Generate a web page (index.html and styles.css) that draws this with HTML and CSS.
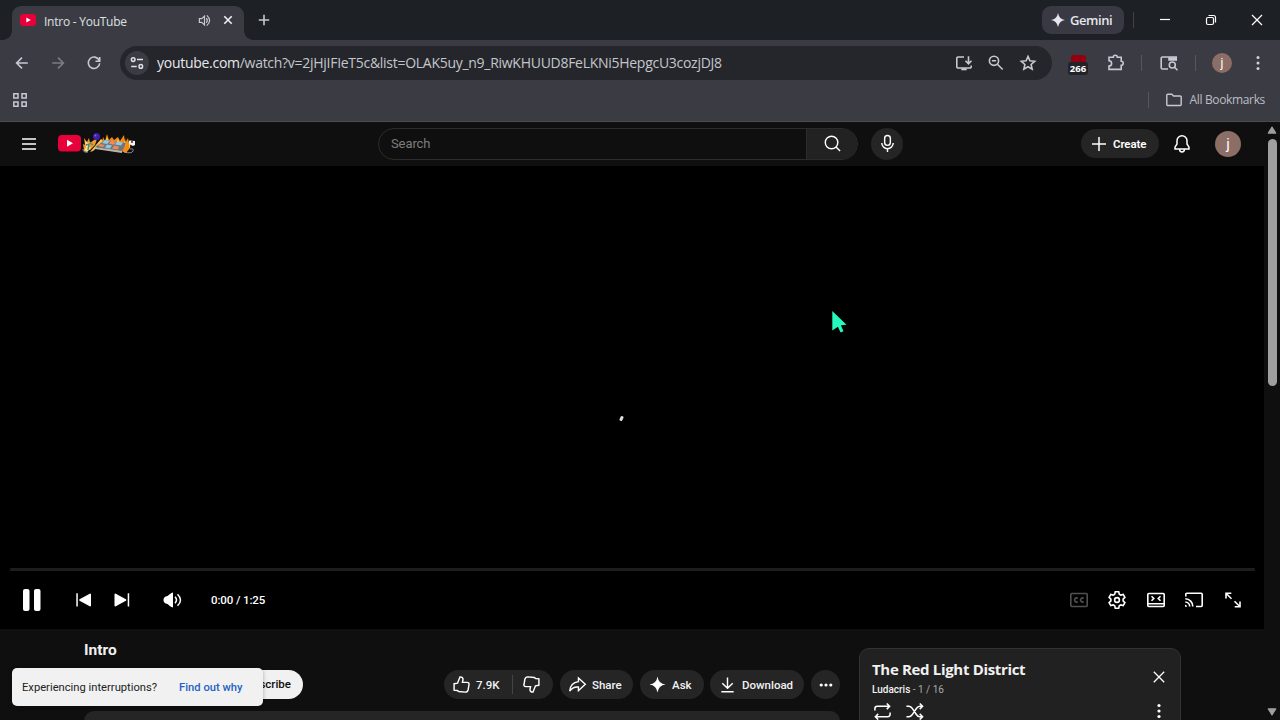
FILE: index.html
```html
<!DOCTYPE html>
<html lang="en">
<head>
    <meta charset="UTF-8">
    <meta name="viewport" content="width=device-width, initial-scale=1.0">
    <title>Intro - YouTube</title>
    <link rel="stylesheet" href="styles.css">
</head>
<body>
    <!-- Browser: tab strip -->
    <div class="tab-strip">
        <div class="tab">
            <svg class="favicon" viewBox="0 0 16 12"><rect width="16" height="12" rx="3" fill="#e8003a"/><path d="M6.3 3.4v5.2L10.8 6z" fill="#fff"/></svg>
            <span class="tab-title">Intro - YouTube</span>
            <svg class="tab-audio" viewBox="0 0 14 14"><path d="M1.500 5v4H4l3 2.800V2.200L4 5z"/><path d="M9 4.500q2 2.500 0 5M9.500 1.500q6 5.500 0 11"/></svg>
            <svg class="tab-close" viewBox="0 0 10 10"><path d="M1.300 1.300l7.400 7.400M8.700 1.300L1.300 8.700"/></svg>
        </div>
        <svg class="new-tab" viewBox="0 0 12 12"><path d="M6 .8v10.400M.8 6h10.400"/></svg>
        <div class="gemini">
            <svg viewBox="0 0 14 14"><path d="M7 0Q8 6 14 7Q8 8 7 14Q6 8 0 7Q6 6 7 0z" fill="#e6e6ec"/></svg>
            <span>Gemini</span>
        </div>
        <span class="strip-divider"></span>
        <div class="window-buttons">
            <svg viewBox="0 0 12 12"><path d="M1 5.500h10"/></svg>
            <svg viewBox="0 0 12 12"><rect x="1.500" y="3.500" width="7" height="7" rx="1.500"/><path d="M3.500 1.500H8.500a2 2 0 0 1 2 2V8.500"/></svg>
            <svg viewBox="0 0 12 12"><path d="M1 1l10 10M11 1L1 11"/></svg>
        </div>
    </div>

    <!-- Browser: toolbar -->
    <div class="toolbar">
        <svg class="nav-icon" viewBox="0 0 16 16"><path d="M13.800 8H2.800M8 2.600L2.600 8L8 13.400"/></svg>
        <svg class="nav-icon disabled" viewBox="0 0 16 16"><path d="M2.200 8h11M8 2.600L13.400 8L8 13.400"/></svg>
        <svg class="nav-icon" viewBox="0 0 16 16"><path d="M13.200 5.400A5.700 5.700 0 1 0 13.700 8.200M13.700 2v4.200H9.500"/></svg>
        <div class="omnibox">
            <span class="site-info">
                <svg viewBox="0 0 14 14"><circle cx="3.200" cy="3.600" r="1.800"/><path d="M7 3.600h6M1.200 10.400h5.500"/><circle cx="10.800" cy="10.400" r="1.800"/></svg>
            </span>
            <span class="url"><b>youtube.com</b>/watch?v=2jHjIFIeT5c&amp;list=OLAK5uy_n9_RiwKHUUD8FeLKNi5HepgcU3cozjDJ8</span>
            <svg class="box-icon" viewBox="0 0 20 20"><path d="M10 4H4a1.200 1.200 0 0 0-1.200 1.200V13.800A1.200 1.200 0 0 0 4 15h12a1.200 1.200 0 0 0 1.200-1.200V12.500M14.500 3.200v7.300M11.500 7.800l3 3l3-3"/><path d="M7.300 16.300h5.400" stroke-width="2"/></svg>
            <svg class="box-icon" viewBox="0 0 20 20"><circle cx="8" cy="7.800" r="4.600"/><path d="M11.400 11.200l5.300 5.300M5.900 7.800h4.200"/></svg>
            <svg class="box-icon" viewBox="0 0 20 20"><path d="M10 3.400l1.900 4.400l4.800.45l-3.600 3.200l1.050 4.700L10 13.700l-4.150 2.450l1.050-4.700L3.300 8.250l4.800-.45z"/></svg>
        </div>
        <div class="ext-badge"><i></i><span>266</span></div>
        <svg class="bar-icon puzzle" viewBox="0 0 20 20"><path d="M3 4.200H7.300a2 2 0 0 1 4 0H15.200V8.300a2 2 0 0 1 0 4V16.400H3V13a2.600 2.600 0 0 0 0-5.200z"/></svg>
        <span class="bar-divider"></span>
        <svg class="bar-icon lens" viewBox="0 0 20 20"><path d="M9 16H3.500A1.300 1.300 0 0 1 2.200 14.700V5.300A1.300 1.300 0 0 1 3.500 4H17.200V7.500"/><path d="M10 5h7.200v2H10z" fill="#c7c8d2"/><circle cx="13.300" cy="12" r="3"/><path d="M15.500 14.200l3 3"/></svg>
        <span class="bar-divider"></span>
        <span class="avatar small">j</span>
        <svg class="kebab" viewBox="0 0 4 16"><circle cx="2" cy="2.500" r="1.500"/><circle cx="2" cy="8" r="1.500"/><circle cx="2" cy="13.500" r="1.500"/></svg>
    </div>

    <!-- Browser: bookmarks -->
    <div class="bookmarks">
        <svg class="apps" viewBox="0 0 16 16"><path d="M1.800 1.800h4.200v4.200H1.800zM10 1.800h4.200v4.200H10zM1.800 10h4.200v4.200H1.800zM10 10h4.200v4.200H10z"/></svg>
        <span class="bar-divider"></span>
        <svg class="folder" viewBox="0 0 18 14"><path d="M1.800 2.200A1 1 0 0 1 2.800 1.200H6.800L8.600 3H15.200a1 1 0 0 1 1 1V11.500a1 1 0 0 1-1 1H2.800a1 1 0 0 1-1-1z"/></svg>
        <span class="bookmarks-label">All Bookmarks</span>
    </div>

    <div class="page">
        <div class="content">
            <!-- Masthead -->
            <div class="masthead">
                <svg class="menu" viewBox="0 0 16 14"><path d="M1 2h14M1 7h14M1 12h14"/></svg>
                <svg class="logo" viewBox="0 0 80 24">
                    <rect x="1" y="4" width="23" height="16.500" rx="4" fill="#e8003a"/>
                    <path d="M10 8.800v7l6-3.500z" fill="#fff"/>
                    <!-- left flame and bat -->
                    <path d="M27 19l-1-6l2 1l-1-7l3 4l2-4l1 5l4-3l3-1l-2 6l-5 5z" fill="#f59a23"/>
                    <path d="M28 10l3 2l3-1l-3 4l3 2l-4 4l-3-1l2-4z" fill="#ffe08a"/>
                    <path d="M44 8l3 2L36 20l-3 1z" fill="#f4c752"/>
                    <path d="M29 14l3-1l-1 6M33 12l3 2" stroke="#3e8d8b" fill="none"/>
                    <circle cx="39.500" cy="5.500" r="3.500" fill="#3f1fae"/>
                    <circle cx="38.500" cy="4.500" r="1" fill="#8068e8"/>
                    <!-- flames behind the board -->
                    <path d="M45 12l1-6l2 4l2-7l2 6l3-3l2 3l4-3l2 4l4-6l1 8l3-5l1 5l2-3l-1 8l-4 5z" fill="#f58a12"/>
                    <path d="M49 10l1-4l1 4zM60 11l1-3l1 3zM67 13l1-6l1 7zM72 15l1-4l0 6z" fill="#ffdc60"/>
                    <path d="M38 16l10-7l21 3l-4 9z" fill="#6f747a"/>
                    <path d="M38 16l27 4v2L38 18z" fill="#b9b5a8"/>
                    <path d="M48 9l5 1l-3 3l-5-1zM60 10.500l6 1l-2 3l-6-1zM50 13.500l5 1l-2 3l-5-1z" fill="#91c8e8"/>
                    <path d="M54 9.800l5 1l-2 3l-5-1zM57 14.500l5 1l-1 3l-6-1zM43 13l5 1l-2 2l-5-1z" fill="#ee8b57"/>
                    <path d="M26 18q0 4 5 3M67 21q8 2 9-1q1-3-3-2" stroke="#aaa" fill="none" stroke-width=".8"/>
                    <path d="M72 9.500l6 .5v4l-2 1l-4-2z" fill="#f4f4f4"/>
                    <path d="M75 10v2" stroke="#333"/>
                </svg>
                <div class="search">
                    <span class="search-field">Search</span>
                    <span class="search-btn"><svg viewBox="0 0 20 20"><circle cx="9" cy="9" r="6.600"/><path d="M13.700 13.700L18 18"/></svg></span>
                </div>
                <span class="mic"><svg viewBox="0 0 20 20"><rect x="7" y="1.500" width="6" height="10.500" rx="3"/><path d="M4 9.500a6 6 0 0 0 12 0M10 15.500v3.500"/></svg></span>
                <div class="create">
                    <svg viewBox="0 0 16 16"><path d="M8 1v14M1 8h14"/></svg>
                    <span>Create</span>
                </div>
                <svg class="bell" viewBox="0 0 18 20"><path d="M9 1.800a5 5 0 0 0-5 5V10L2 13.200V15h14v-1.800L14 10V6.800a5 5 0 0 0-5-5zM6.600 15.500a2.400 2.400 0 0 0 4.800 0"/></svg>
                <span class="avatar">j</span>
            </div>

            <!-- Player -->
            <div class="player">
                <div class="stage">
                    <span class="spinner"></span>
                    <svg class="cursor" viewBox="0 0 15 23"><path d="M.3 0L14.500 13.800L8.900 14.300L11.500 20.200L8.600 21.600L5.900 15.700L.3 19.500z" fill="#26f9bd"/></svg>
                </div>
                <div class="progress"></div>
                <div class="controls">
                    <svg class="pause" viewBox="0 0 18 22"><rect width="6.500" height="22" rx="2"/><rect x="11" width="6.500" height="22" rx="2"/></svg>
                    <svg class="skip" viewBox="0 0 16 14"><path d="M.3.3h1.500v13.200H.3zM15 1.500v11a.8.8 0 0 1-1.300.7L3.600 7.700a.8.8 0 0 1 0-1.400L13.700.8A.8.8 0 0 1 15 1.500z"/></svg>
                    <svg class="skip next" viewBox="0 0 16 14"><path d="M13.700.3h1.500v13.200h-1.500zM.5 1.500v11a.8.8 0 0 0 1.300.7L11.900 7.700a.8.8 0 0 0 0-1.400L1.800.8A.8.8 0 0 0 .5 1.500z"/></svg>
                    <svg class="volume" viewBox="0 0 20 16"><path d="M10 .5v15C8 15 6 13.500 4.500 12C1.500 11.500.5 10 .5 8S1.500 4.500 4.500 4C6 2.500 8 1 10 .5z"/><path d="M12 4.800q3 3.200 0 6.400M14.500 2.200q6 5.800 0 11.600" fill="none" stroke="#fff" stroke-width="1.500"/></svg>
                    <span class="time">0:00 / 1:25</span>
                    <div class="controls-right">
                        <svg class="dim" viewBox="0 0 20 20"><rect x="1.800" y="3.500" width="16.400" height="13" rx="1"/><path d="M8.800 8.400A2 2 0 1 0 8.800 11.600M14.800 8.400A2 2 0 1 0 14.800 11.600"/></svg>
                        <svg viewBox="0 0 20 20"><path d="M8.300 1.800h3.400l.6 2.400l1.500.9l2.400-.7l1.700 2.900l-1.800 1.800v1.800l1.800 1.800l-1.700 2.900l-2.400-.7l-1.500.9l-.6 2.400H8.300l-.6-2.400l-1.500-.9l-2.400.7l-1.700-2.900l1.800-1.800V9.100L2.100 7.300l1.700-2.900l2.400.7l1.500-.9z"/><circle cx="10" cy="10" r="2.400"/></svg>
                        <svg viewBox="0 0 20 20"><rect x="1.800" y="3.500" width="16.400" height="13" rx="1"/><path d="M2 13.700h16M5.500 6.200l2.300 2.300l-2.300 2.300M14.500 6.200l-2.300 2.300l2.300 2.300"/></svg>
                        <svg viewBox="0 0 20 20"><path d="M1.800 6.500V4.300a1 1 0 0 1 1-1H17.200a1 1 0 0 1 1 1V15.500a1 1 0 0 1-1 1H12M1.300 8.800a7.500 7.500 0 0 1 7.500 7.700M1.300 12a4.500 4.500 0 0 1 4.400 4.500"/><path d="M1 14.800a2 2 0 0 1 2 2H1z" fill="#fff" stroke="none"/></svg>
                        <svg viewBox="0 0 20 20"><path d="M3 8.500V3.300H8.300M3.500 3.800l5 5M17 11.500v5.200h-5.300M16.500 16.200l-5-5"/></svg>
                    </div>
                </div>
            </div>

            <!-- Below the player -->
            <div class="below">
                <div class="primary">
                    <h1>Intro</h1>
                    <div class="actions">
                        <span class="subscribe">Subscribe</span>
                        <div class="pill likes">
                            <svg viewBox="0 0 20 20"><path d="M2.200 9.200L5.800 8.600L8.400 2Q11.800 2 11.600 5L11 7.800H16Q18.300 8 17.900 10L17 15.500Q16.300 18 14 18L7 17.300L5.500 16.300L2.200 16z"/></svg>
                            <span>7.9K</span>
                            <i></i>
                            <svg class="flip" viewBox="0 0 20 20"><path d="M2.200 9.200L5.800 8.600L8.400 2Q11.800 2 11.600 5L11 7.800H16Q18.300 8 17.900 10L17 15.500Q16.300 18 14 18L7 17.300L5.500 16.300L2.200 16z"/></svg>
                        </div>
                        <div class="pill share">
                            <svg viewBox="0 0 20 20"><path d="M11 3.200L18.200 9.800L11 16.500V12.700Q5 12 1.800 17Q2.500 8 11 7z"/></svg>
                            <span>Share</span>
                        </div>
                        <div class="pill ask">
                            <svg viewBox="0 0 20 20"><path d="M10 1.500Q11 9 18.500 10Q11 11 10 18.500Q9 11 1.500 10Q9 9 10 1.500z" fill="#fff" stroke="none"/></svg>
                            <span>Ask</span>
                        </div>
                        <div class="pill download">
                            <svg viewBox="0 0 20 20"><path d="M10 2.500v11.300M4.500 8.600L10 14l5.500-5.400M3.500 17.600h13"/></svg>
                            <span>Download</span>
                        </div>
                        <div class="pill more">
                            <svg viewBox="0 0 14 4"><circle cx="2.200" cy="2" r="1.600"/><circle cx="7" cy="2" r="1.600"/><circle cx="11.800" cy="2" r="1.600"/></svg>
                        </div>
                    </div>
                    <div class="description"></div>
                </div>
                <div class="playlist">
                    <div class="playlist-head">
                        <div>
                            <h2>The Red Light District</h2>
                            <p>Ludacris <span>- 1 / 16</span></p>
                        </div>
                        <svg viewBox="0 0 12 12"><path d="M.8.8l10.400 10.400M11.200.8L.8 11.200"/></svg>
                    </div>
                    <div class="playlist-tools">
                        <svg viewBox="0 0 20 20"><path d="M2 9V7Q2 4.500 4.500 4.500H17M14.500 1.500l3 3l-3 3M18 11v2q0 2.500-2.500 2.500H3M5.500 12.500l-3 3l3 3"/></svg>
                        <svg viewBox="0 0 20 20"><path d="M1.500 4.500H4Q6 4.500 7.500 6.500L12 13.200Q13.500 15.500 15.500 15.500H18M1.500 15.500H4Q6 15.500 7.500 13.500L12 6.800Q13.500 4.500 15.500 4.500H18M15.500 1.500l3 3l-3 3M15.500 12.500l3 3l-3 3"/></svg>
                        <svg class="kebab" viewBox="0 0 4 16"><circle cx="2" cy="2.500" r="1.600"/><circle cx="2" cy="8" r="1.600"/><circle cx="2" cy="13.500" r="1.600"/></svg>
                    </div>
                </div>
            </div>
        </div>

        <div class="scrollbar">
            <svg viewBox="0 0 10 8"><path d="M5 .8L9 7.200H1z" stroke-width="1"/></svg>
            <span class="thumb"></span>
            <svg class="down" viewBox="0 0 10 8"><path d="M5 7.200L1 .8h8z" stroke-width="1"/></svg>
        </div>
    </div>

    <div class="toast">
        <span>Experiencing interruptions?</span>
        <a>Find out why</a>
    </div>
</body>
</html>
```
FILE: styles.css
```css
* {
    box-sizing: border-box;
}
body {
    margin: 0;
    width: 1280px;
    height: 720px;
    overflow: hidden;
    display: flex;
    flex-direction: column;
    background: #0f0f0f;
    color: #fff;
    font-family: Roboto, sans-serif;
    position: relative;
}
svg {
    display: block;
    flex: none;
    fill: none;
    stroke: #c7c8d2;
    stroke-width: 1.6;
}
h1, h2, p {
    margin: 0;
}

/* tab strip */
.tab-strip {
    height: 40px;
    flex: none;
    display: flex;
    align-items: center;
    background: #1d2025;
    font-family: "Open Sans", sans-serif;
}
.tab {
    position: relative;
    width: 232px;
    height: 34px;
    margin: 6px 0 0 12px;
    padding: 0 11px 6px 8px;
    display: flex;
    align-items: center;
    background: #3b3c43;
    border-radius: 9px 9px 0 0;
}
.tab::before,
.tab::after {
    content: "";
    position: absolute;
    bottom: 0;
    width: 9px;
    height: 9px;
}
.tab::before {
    left: -9px;
    background: radial-gradient(circle at 0 0, #1d2025 8.5px, #3b3c43 9px);
}
.tab::after {
    right: -9px;
    background: radial-gradient(circle at 100% 0, #1d2025 8.5px, #3b3c43 9px);
}
.favicon {
    width: 16px;
    height: 12px;
    stroke: none;
}
.tab-title {
    flex: 1;
    margin-left: 8px;
    font-size: 12px;
    line-height: 20px;
    padding-top: 3px;
    letter-spacing: -0.25px;
    color: #dfe0e6;
}
.tab-audio {
    width: 13px;
    height: 13px;
    margin-right: 12px;
    stroke-width: 1.3;
}
.tab-close {
    width: 10px;
    height: 10px;
    stroke: #f0f0f4;
}
.new-tab {
    width: 12px;
    height: 12px;
    margin-left: 14px;
}
.gemini {
    width: 82px;
    height: 28px;
    margin-left: auto;
    padding-left: 9px;
    display: flex;
    align-items: center;
    gap: 5px;
    border-radius: 9px;
    background: #383942;
    font-size: 13px;
    font-weight: 600;
    letter-spacing: -0.45px;
    color: #e6e6ec;
}
.gemini svg {
    width: 14px;
    height: 14px;
    stroke: none;
}
.strip-divider {
    width: 1px;
    height: 16px;
    margin-left: 9px;
    background: #3f4149;
}
.window-buttons {
    display: flex;
    gap: 34px;
    margin: 0 17px 0 25px;
}
.window-buttons svg {
    width: 12px;
    height: 12px;
    stroke: #fff;
    stroke-width: 1.2;
}

/* toolbar */
.toolbar {
    height: 46px;
    flex: none;
    display: flex;
    align-items: center;
    padding-left: 14px;
    background: #3b3c43;
    font-family: "Open Sans", sans-serif;
}
.nav-icon {
    width: 16px;
    height: 16px;
    margin-right: 20px;
}
.nav-icon.disabled {
    stroke: #7b7c84;
}
.nav-icon:nth-child(3) {
    margin-right: 18px;
}
.omnibox {
    width: 932px;
    height: 34px;
    padding: 0 14px 0 5px;
    display: flex;
    align-items: center;
    gap: 12px;
    border-radius: 17px;
    background: #24262b;
}
.site-info {
    width: 24px;
    height: 24px;
    display: grid;
    place-items: center;
    border-radius: 50%;
    background: #3b3c43;
}
.site-info svg {
    width: 14px;
    height: 14px;
    stroke: #e0e0e6;
    stroke-width: 1.5;
}
.url {
    flex: 1;
    margin: -2px 0 0 -4px;
    font-size: 14px;
    letter-spacing: -0.28px;
    white-space: nowrap;
    color: #c5c6cb;
}
.url b {
    font-weight: 400;
    color: #e8e8ec;
}
.box-icon,
.bar-icon {
    width: 20px;
    height: 20px;
}
.ext-badge {
    width: 20px;
    margin: 4px 0 0 16px;
    display: flex;
    flex-direction: column;
    align-items: center;
}
.ext-badge i {
    width: 15px;
    height: 7px;
    border-radius: 3px 3px 0 0;
    background: #930010;
}
.ext-badge span {
    padding: 0 2px;
    border-radius: 3px;
    background: #222328;
    font-size: 9.5px;
    line-height: 13px;
    font-weight: 700;
}
.puzzle {
    margin: 0 15px 0 18px;
}
.lens {
    margin: 0 16px 0 17px;
}
.bar-divider {
    width: 1px;
    height: 16px;
    background: #55565f;
}
.avatar {
    width: 26px;
    height: 26px;
    display: grid;
    place-items: center;
    border-radius: 50%;
    background: #8d6e66;
    font-family: Roboto, sans-serif;
    font-size: 15px;
}
.avatar.small {
    width: 20px;
    height: 20px;
    margin: 0 24px 0 16px;
    font-size: 12px;
}
.kebab {
    width: 4px;
    height: 16px;
    fill: #d0d1d8;
    stroke: none;
}

/* bookmarks */
.bookmarks {
    height: 36px;
    flex: none;
    display: flex;
    align-items: center;
    padding: 0 15px 8px 12px;
    background: #3b3c43;
    border-bottom: 1px solid #4b4c50;
    font-family: "Open Sans", sans-serif;
}
.apps {
    width: 16px;
    height: 16px;
    stroke-width: 1.5;
}
.bookmarks .bar-divider {
    margin-left: auto;
}
.folder {
    width: 18px;
    height: 14px;
    margin: 0 7px 0 16px;
    stroke-width: 1.4;
}
.bookmarks-label {
    font-size: 12px;
    line-height: 18px;
    letter-spacing: -0.35px;
    color: #bcbdc6;
}

/* page */
.page {
    flex: 1;
    min-height: 0;
    display: flex;
}
.content {
    width: 1264px;
    min-width: 0;
    overflow: hidden;
}
.masthead {
    height: 44px;
    display: flex;
    align-items: center;
    padding: 0 0 1px 21px;
}
.masthead svg {
    stroke: #fff;
    stroke-width: 1.5;
}
.menu {
    width: 16px;
    height: 14px;
}
.masthead .logo {
    width: 80px;
    height: 24px;
    margin: -2px 0 0 19.5px;
    stroke: none;
}
.search {
    width: 480px;
    height: 32px;
    margin-left: 241.5px;
    display: flex;
    border: 1px solid #2c2c2c;
    border-radius: 16px;
    overflow: hidden;
}
.search-field {
    flex: 1;
    padding-left: 12px;
    font-size: 13px;
    line-height: 29px;
    letter-spacing: -0.1px;
    color: #7d7d7d;
}
.search-btn {
    width: 51px;
    display: grid;
    place-items: center;
    border-left: 1px solid #2c2c2c;
    background: #222;
}
.search-btn svg {
    width: 19px;
    height: 19px;
}
.mic {
    width: 32px;
    height: 32px;
    margin-left: 13px;
    display: grid;
    place-items: center;
    border-radius: 50%;
    background: #252525;
}
.mic svg {
    width: 19px;
    height: 19px;
}
.create {
    width: 78px;
    height: 29px;
    margin-left: auto;
    padding-left: 10px;
    display: flex;
    align-items: center;
    gap: 6px;
    border-radius: 15px;
    background: #252525;
    font-size: 11.5px;
    font-weight: 600;
    letter-spacing: -0.1px;
}
.create svg {
    width: 16px;
    height: 16px;
}
.bell {
    width: 18px;
    height: 20px;
    margin: 0 24px 0 14px;
}
.masthead .avatar {
    margin-right: 23px;
}

/* player */
.player {
    height: 463px;
    display: flex;
    flex-direction: column;
    background: #000;
}
.stage {
    position: relative;
    flex: 1;
}
.spinner {
    position: absolute;
    left: 620px;
    top: 250px;
    width: 3px;
    height: 5px;
    border-radius: 1px;
    background: #ddd;
    transform: rotate(25deg);
}
.cursor {
    position: absolute;
    left: 832px;
    top: 145px;
    width: 15px;
    height: 23px;
    stroke: none;
}
.progress {
    height: 3px;
    margin: 0 9px 0 10px;
    border-radius: 1px;
    background: #1d1d1d;
}
.controls {
    height: 58px;
    display: flex;
    align-items: center;
    padding: 0 21.5px 0 23px;
}
.controls svg {
    fill: #fff;
    stroke: none;
}
.pause {
    width: 18px;
    height: 22px;
}
.skip {
    width: 16px;
    height: 14px;
    margin-left: 35px;
}
.skip.next {
    margin-left: 22px;
}
.volume {
    width: 20px;
    height: 16px;
    margin-left: 33px;
}
.time {
    margin-left: 28px;
    font-size: 11.5px;
    font-weight: 500;
    letter-spacing: -0.12px;
}
.controls-right {
    margin-left: auto;
    display: flex;
    gap: 18.5px;
}
.controls-right svg {
    width: 20px;
    height: 20px;
    fill: none;
    stroke: #fff;
    stroke-width: 1.6;
}
.controls-right .dim {
    stroke: #505050;
}

/* below the player */
.below {
    display: flex;
    padding-left: 84px;
}
.primary {
    width: 756px;
}
.primary h1 {
    margin-top: 11px;
    font-size: 15.5px;
    line-height: 20px;
    font-weight: 700;
    color: #f1f1f1;
}
.actions {
    display: flex;
    margin-top: 10px;
}
.subscribe {
    width: 76px;
    margin: 0 141px 0 143px;
    border-radius: 15px;
    background: #f1f1f1;
    color: #0f0f0f;
    font-size: 11.5px;
    font-weight: 500;
    line-height: 29px;
    padding-right: 12px;
    text-align: right;
}
.pill {
    height: 29px;
    display: flex;
    align-items: center;
    border-radius: 15px;
    background: #252525;
    font-size: 11.5px;
    font-weight: 500;
    color: #f1f1f1;
}
.pill svg {
    width: 19px;
    height: 19px;
    stroke: #fff;
    stroke-width: 1.5;
}
.pill span {
    margin-left: 5px;
}
.likes {
    width: 109px;
    padding-left: 8px;
}
.likes i {
    width: 1px;
    height: 19px;
    margin: 0 9px 0 12px;
    background: #444;
}
.likes .flip {
    transform: rotate(180deg);
}
.share {
    width: 73px;
    margin-left: 7px;
    padding-left: 8px;
}
.ask {
    width: 64px;
    margin-left: 7px;
    padding-left: 8px;
}
.download {
    width: 94px;
    margin-left: 6px;
    padding-left: 8px;
}
.more {
    width: 29px;
    margin-left: 7px;
    justify-content: center;
}
.more svg {
    width: 14px;
    height: 4px;
    fill: #fff;
    stroke: none;
}
.description {
    height: 60px;
    margin-top: 12px;
    border-radius: 10px;
    background: #252525;
}
.playlist {
    width: 322px;
    height: 120px;
    margin: 19px 0 0 19px;
    padding: 11px 15px 0 12px;
    border: 1px solid #333;
    border-radius: 10px;
    background: #212121;
}
.playlist-head {
    display: flex;
    justify-content: space-between;
}
.playlist-head svg {
    width: 12px;
    height: 12px;
    margin-top: 11px;
    stroke: #fff;
    stroke-width: 1.3;
}
.playlist h2 {
    font-family: "Open Sans", sans-serif;
    font-size: 15px;
    line-height: 20px;
    font-weight: 700;
    letter-spacing: -0.33px;
    color: #f1f1f1;
    margin-top: -1px;
}
.playlist p {
    margin-top: 4px;
    font-size: 10px;
    line-height: 14px;
    font-weight: 500;
    color: #f1f1f1;
}
.playlist p span {
    color: #aaa;
    font-weight: 400;
}
.playlist-tools {
    display: flex;
    gap: 13px;
    margin: 5px 0 0 1px;
}
.playlist-tools svg {
    width: 19px;
    height: 19px;
    stroke: #fff;
}
.playlist-tools .kebab {
    width: 4px;
    height: 16px;
    margin: 1px 4px 0 auto;
    fill: #fff;
    stroke: none;
}

/* scrollbar */
.scrollbar {
    width: 16px;
    display: flex;
    flex-direction: column;
    align-items: center;
    padding: 4px 0;
}
.scrollbar svg {
    width: 10px;
    height: 8px;
    fill: #9f9f9f;
    stroke: #9f9f9f;
    stroke-linejoin: round;
}
.thumb {
    width: 9px;
    height: 247px;
    margin-top: 5px;
    border-radius: 5px;
    background: #9f9f9f;
}
.scrollbar .down {
    margin-top: auto;
}

/* toast */
.toast {
    position: absolute;
    left: 12px;
    top: 668px;
    width: 251px;
    height: 38px;
    padding: 0 10px;
    display: flex;
    align-items: center;
    gap: 22px;
    border-radius: 5px;
    background: #f1f1f1;
    box-shadow: 0 1px 4px rgba(0, 0, 0, 0.3);
    font-size: 11.2px;
    white-space: nowrap;
    color: #222;
}
.toast a {
    color: #1f62c4;
    font-weight: 500;
}
```
